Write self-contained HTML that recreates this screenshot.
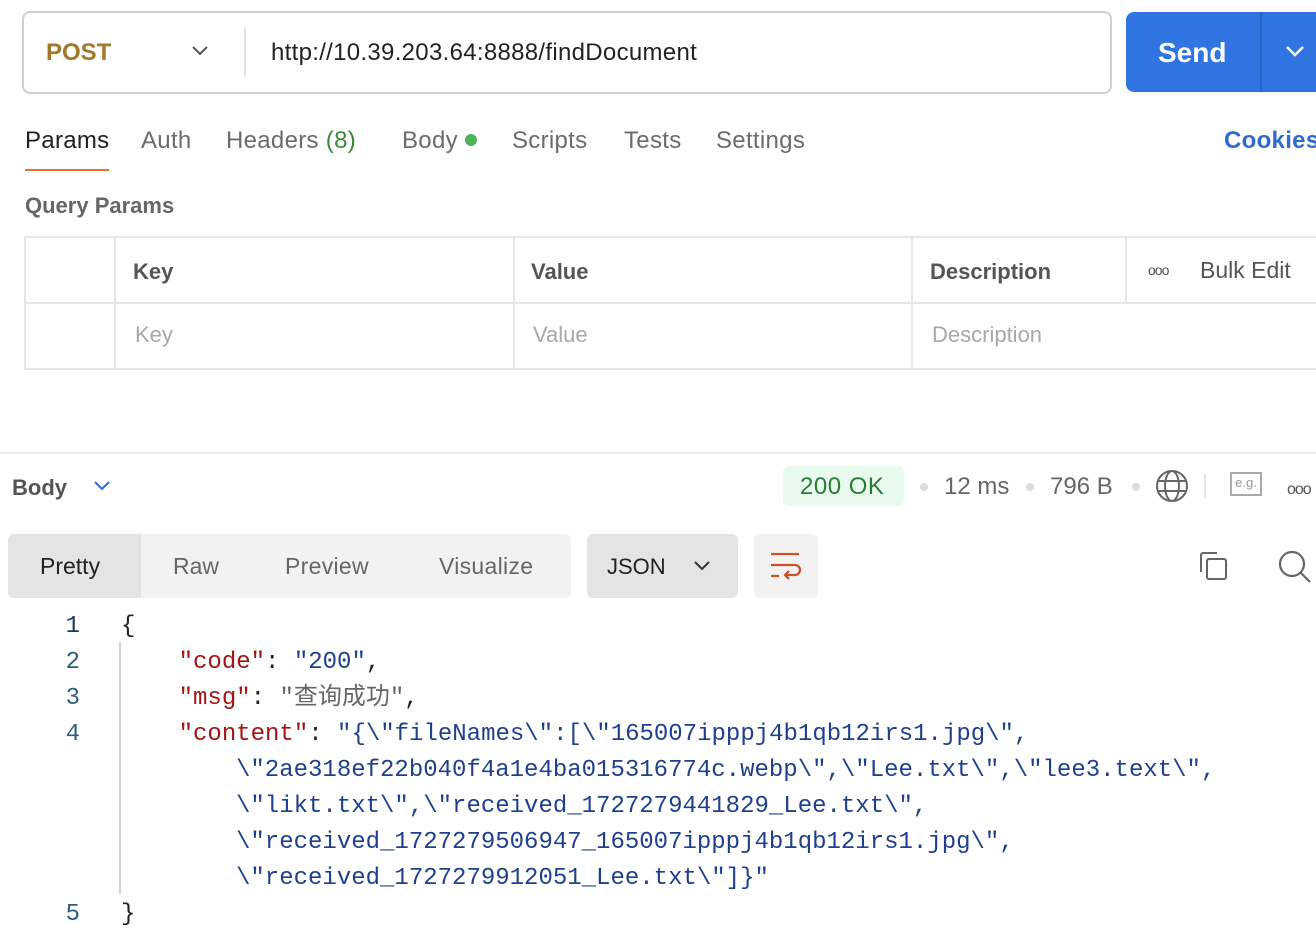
<!DOCTYPE html>
<html><head><meta charset="utf-8"><style>
*{box-sizing:border-box;margin:0;padding:0}
body{width:1316px;height:941px;overflow:hidden;background:#fff;font-family:"Liberation Sans","Noto Sans CJK SC",sans-serif;color:#212121;position:relative}
.a{position:absolute;white-space:nowrap}
.url{left:22px;top:11px;width:1090px;height:83px;border:2px solid #cfcfcf;border-radius:8px}
.send{left:1126px;top:12px;width:200px;height:80px;background:#2f74e0;border-radius:8px;color:#fff;font-weight:bold;font-size:28px}
.tab{top:127px;font-size:24px;color:#6b6b6b;letter-spacing:0.3px}
.th{font-weight:bold;font-size:22px;color:#555}
.ph{font-size:22px;color:#a8a8a8}
.code{font-family:"Liberation Mono","Noto Sans CJK SC",monospace;font-size:24px;line-height:36px;white-space:pre}
.k{color:#a31515}.s{color:#1f3f8f}.p{color:#222}.c{color:#666}
.ln{font-family:"Liberation Mono",monospace;font-size:24px;color:#2e5f7a;width:20px;text-align:right;left:60px}
</style></head><body>
<div class="a url"></div>
<div class="a" style="left:46px;top:39px;font-size:24px;font-weight:bold;color:#a2782a">POST</div>
<svg class="a" style="left:190px;top:44px" width="20" height="14"><path d="M3 3l7 7 7-7" fill="none" stroke="#555" stroke-width="2"/></svg>
<div class="a" style="left:244px;top:28px;width:2px;height:48px;background:#e2e2e2"></div>
<div class="a" style="left:271px;top:39px;font-size:24px;color:#222;letter-spacing:0.3px">http://10.39.203.64:8888/findDocument</div>
<div class="a send"><span class="a" style="left:32px;top:25px">Send</span><div class="a" style="left:134px;top:0;width:2px;height:80px;background:#2565c8"></div><svg class="a" style="left:158px;top:32px" width="22" height="16"><path d="M3 3l8 8 8-8" fill="none" stroke="#fff" stroke-width="2.5"/></svg></div>

<div class="a tab" style="left:25px;color:#212121">Params</div>
<div class="a" style="left:25px;top:169px;width:84px;height:2px;background:#e8703f"></div>
<div class="a tab" style="left:141px">Auth</div>
<div class="a tab" style="left:226px">Headers <span style="color:#3b8a3b">(8)</span></div>
<div class="a tab" style="left:402px">Body <span style="display:inline-block;width:12px;height:12px;border-radius:50%;background:#4cb35a;vertical-align:middle;margin-bottom:4px"></span></div>
<div class="a tab" style="left:512px">Scripts</div>
<div class="a tab" style="left:624px">Tests</div>
<div class="a tab" style="left:716px">Settings</div>
<div class="a tab" style="left:1224px;color:#2f6ad0;font-weight:bold">Cookies</div>
<div class="a" style="left:25px;top:193px;font-size:22px;font-weight:bold;color:#666">Query Params</div>

<div class="a" style="left:24px;top:236px;width:1300px;height:134px;border:2px solid #e6e6e6"></div>
<div class="a" style="left:24px;top:302px;width:1300px;height:2px;background:#e6e6e6"></div>
<div class="a" style="left:114px;top:236px;width:2px;height:134px;background:#e6e6e6"></div>
<div class="a" style="left:513px;top:236px;width:2px;height:134px;background:#e6e6e6"></div>
<div class="a" style="left:911px;top:236px;width:2px;height:134px;background:#e6e6e6"></div>
<div class="a" style="left:1125px;top:236px;width:2px;height:67px;background:#e6e6e6"></div>
<div class="a th" style="left:133px;top:259px">Key</div>
<div class="a th" style="left:531px;top:259px">Value</div>
<div class="a th" style="left:930px;top:259px">Description</div>
<div class="a" style="left:1148px;top:262px;font-size:14px;color:#555;letter-spacing:-1px">ooo</div>
<div class="a" style="left:1200px;top:257px;font-size:23px;color:#555">Bulk Edit</div>
<div class="a ph" style="left:135px;top:322px">Key</div>
<div class="a ph" style="left:533px;top:322px">Value</div>
<div class="a ph" style="left:932px;top:322px">Description</div>

<div class="a" style="left:0;top:452px;width:1316px;height:2px;background:#ececec"></div>
<div class="a" style="left:12px;top:475px;font-size:22px;font-weight:bold;color:#555">Body</div>
<svg class="a" style="left:92px;top:479px" width="20" height="14"><path d="M3 3l7 7 7-7" fill="none" stroke="#2f6ad0" stroke-width="2"/></svg>
<div class="a" style="left:783px;top:466px;width:121px;height:40px;background:#e8faee;border-radius:6px"></div>
<div class="a" style="left:800px;top:473px;font-size:24px;color:#2d7a36;letter-spacing:0.5px">200 OK</div>
<div class="a" style="left:920px;top:483px;width:8px;height:8px;border-radius:50%;background:#ddd"></div>
<div class="a" style="left:944px;top:473px;font-size:24px;color:#666">12 ms</div>
<div class="a" style="left:1026px;top:483px;width:8px;height:8px;border-radius:50%;background:#ddd"></div>
<div class="a" style="left:1050px;top:473px;font-size:24px;color:#666">796 B</div>
<div class="a" style="left:1132px;top:483px;width:8px;height:8px;border-radius:50%;background:#ddd"></div>
<svg class="a" style="left:1155px;top:469px" width="34" height="34" fill="none" stroke="#666" stroke-width="2"><circle cx="17" cy="17" r="15"/><ellipse cx="17" cy="17" rx="7" ry="15"/><path d="M3 12h28M3 22h28"/></svg>
<div class="a" style="left:1204px;top:474px;width:2px;height:24px;background:#e6e6e6"></div>
<div class="a" style="left:1230px;top:472px;width:32px;height:24px;border:2px solid #aaa;font-size:13px;color:#999;text-align:center;line-height:18px">e.g.</div>
<div class="a" style="left:1287px;top:481px;font-size:16px;color:#555;letter-spacing:-1px">ooo</div>

<div class="a" style="left:8px;top:534px;width:563px;height:64px;background:#f2f2f2;border-radius:6px"></div>
<div class="a" style="left:8px;top:534px;width:133px;height:64px;background:#e4e4e4;border-radius:6px 0 0 6px"></div>
<div class="a" style="left:40px;top:553px;font-size:23px;color:#222">Pretty</div>
<div class="a" style="left:173px;top:553px;font-size:23px;color:#666">Raw</div>
<div class="a" style="left:285px;top:553px;font-size:23px;color:#666;letter-spacing:0.3px">Preview</div>
<div class="a" style="left:439px;top:553px;font-size:23px;color:#666;letter-spacing:0.3px">Visualize</div>
<div class="a" style="left:587px;top:534px;width:151px;height:64px;background:#e4e4e4;border-radius:6px"></div>
<div class="a" style="left:607px;top:554px;font-size:22px;color:#222">JSON</div>
<svg class="a" style="left:692px;top:559px" width="20" height="14"><path d="M3 3l7 7 7-7" fill="none" stroke="#333" stroke-width="2"/></svg>
<div class="a" style="left:754px;top:534px;width:64px;height:64px;background:#f2f2f2;border-radius:6px"></div>
<svg class="a" style="left:768px;top:550px" width="36" height="32" fill="none" stroke="#c9502a" stroke-width="2.2"><path d="M3 4h28M3 15h24a5 5 0 0 1 0 10h-10M3 26h8M21 21l-4 4 4 4"/></svg>
<svg class="a" style="left:1198px;top:550px" width="32" height="32" fill="none" stroke="#666" stroke-width="2"><path d="M3 22V5a2 2 0 0 1 2-2h14"/><rect x="9" y="9" width="19" height="20" rx="2"/></svg>
<svg class="a" style="left:1276px;top:548px" width="40" height="36" fill="none" stroke="#666" stroke-width="2.2"><circle cx="16" cy="16" r="12"/><path d="M25 25l9 9"/></svg>

<div class="a" style="left:119px;top:642px;width:2px;height:252px;background:#d4d4d4"></div>
<div class="a code ln" style="top:609px;color:#1a3a5a">1</div>
<div class="a code ln" style="top:645px">2</div>
<div class="a code ln" style="top:681px">3</div>
<div class="a code ln" style="top:717px">4</div>
<div class="a code ln" style="top:897px">5</div>
<div class="a code" style="left:121px;top:609px"><span class="p">{</span></div>
<div class="a code" style="left:121px;top:645px"><span class="p">    </span><span class="k">"code"</span><span class="p">: </span><span class="s">"200"</span><span class="p">,</span></div>
<div class="a code" style="left:121px;top:681px"><span class="p">    </span><span class="k">"msg"</span><span class="p">: </span><span class="c">"查询成功"</span><span class="p">,</span></div>
<div class="a code s" style="left:121px;top:717px"><span class="p">    </span><span class="k">"content"</span><span class="p">: </span>"{\"fileNames\":[\"165007ipppj4b1qb12irs1.jpg\",</div>
<div class="a code s" style="left:236px;top:753px">\"2ae318ef22b040f4a1e4ba015316774c.webp\",\"Lee.txt\",\"lee3.text\",</div>
<div class="a code s" style="left:236px;top:789px">\"likt.txt\",\"received_1727279441829_Lee.txt\",</div>
<div class="a code s" style="left:236px;top:825px">\"received_1727279506947_165007ipppj4b1qb12irs1.jpg\",</div>
<div class="a code s" style="left:236px;top:861px">\"received_1727279912051_Lee.txt\"]}"</div>
<div class="a code" style="left:121px;top:897px"><span class="p">}</span></div>
</body></html>
